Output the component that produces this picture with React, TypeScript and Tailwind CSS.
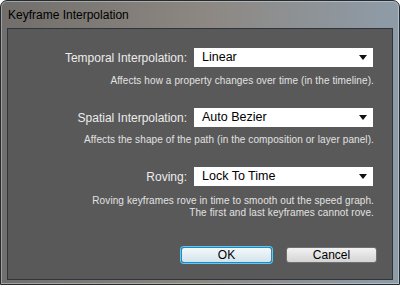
/**
 * Keyframe Interpolation dialog
 */

const uiFont = { fontFamily: '"Liberation Sans", Arial, sans-serif' }

function Dropdown({ value }: { value: string }) {
  return (
    <div className="flex items-center justify-between w-[179px] h-[19px] bg-white pl-[8px] pr-[6px] text-[12.5px] text-black leading-none">
      <span>{value}</span>
      <svg width="8" height="5" viewBox="0 0 8 5">
        <path d="M0 0 L8 0 L4 5 Z" fill="#111" />
      </svg>
    </div>
  )
}

function Row({ label, value }: { label: string; value: string }) {
  return (
    <div className="flex items-center">
      <div className="w-[179px] text-right text-[12px] text-[#ececec] leading-none">{label}</div>
      <div className="ml-[7px]">
        <Dropdown value={value} />
      </div>
    </div>
  )
}

function Desc({ children }: { children: React.ReactNode }) {
  return (
    <div className="text-right text-[10px] leading-[12px] tracking-[0.1px] text-[#e2e2e2] pr-[18px]">{children}</div>
  )
}

export default function App() {
  return (
    <div className="w-[400px] h-[287px] bg-white" style={uiFont}>
      {/* Window frame */}
      <div className="w-[400px] h-[285px] rounded-t-[7px] border border-[#232b33] bg-gradient-to-r from-[#716e6b] via-[#8d8781] to-[#8e9ca8] flex flex-col shadow-[inset_0_0_0_1px_rgba(255,255,255,0.35)]">
        {/* Title bar */}
        <div className="h-[27px] flex items-center pl-[7px] text-[12px] text-black">
          Keyframe Interpolation
        </div>

        {/* Content panel */}
        <div className="flex-1 mx-[6px] mb-[4px] border border-[#2f353c] bg-[#595959] flex flex-col pt-[19px]">
          <Row label="Temporal Interpolation:" value="Linear" />
          <div className="mt-[8px]">
            <Desc>Affects how a property changes over time (in the timeline).</Desc>
          </div>

          <div className="mt-[21px]">
            <Row label="Spatial Interpolation:" value="Auto Bezier" />
          </div>
          <div className="mt-[7px]">
            <Desc>Affects the shape of the path (in the composition or layer panel).</Desc>
          </div>

          <div className="mt-[21px]">
            <Row label="Roving:" value="Lock To Time" />
          </div>
          <div className="mt-[9px]">
            <Desc>
              Roving keyframes rove in time to smooth out the speed graph.
              <br />
              The first and last keyframes cannot rove.
            </Desc>
          </div>

          {/* Buttons */}
          <div className="mt-[28px] flex justify-end gap-[14px] pr-[15px]">
            <button className="w-[91px] h-[16px] rounded-[3px] border border-[#3c7fb1] shadow-[0_0_0_1px_#48d3ff] bg-gradient-to-b from-[#f4f8fa] to-[#d3e4ec] text-[12px] text-black leading-none">
              OK
            </button>
            <button className="w-[91px] h-[16px] rounded-[3px] border border-[#707070] bg-gradient-to-b from-[#f2f2f2] to-[#d4d4d4] text-[12px] text-black leading-none">
              Cancel
            </button>
          </div>
        </div>
      </div>
    </div>
  )
}
